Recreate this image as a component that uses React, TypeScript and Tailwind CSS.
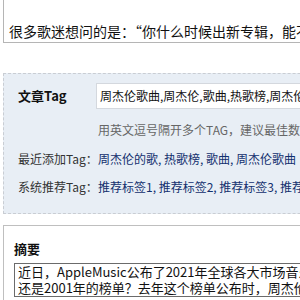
export default function App() {
  const font = { fontFamily: '"Noto Sans CJK SC", "Liberation Sans", sans-serif' }
  return (
    <div className="w-[300px] h-[300px] overflow-hidden bg-white text-[#222]" style={font}>
      <div className="w-[700px] pl-[3px]">
        {/* Content box (top cut off) */}
        <div className="h-[43px] border-x border-b border-[#b5b5b5] flex items-end pl-[5px]">
          <p className="text-[14px] leading-[22px] text-[#111]">
            很多歌迷想问的是：“你什么时候出新专辑，能不能快点出新歌？”
          </p>
        </div>

        {/* Tag panel */}
        <div className="mt-[30px] h-[141px] border border-dashed border-[#c9cdd3] bg-[#e8eef5] pl-[14px] pt-[9px] text-[12px]">
          <div className="flex items-center">
            <span className="w-[78px] text-[13px] font-bold text-[#111]">文章Tag</span>
            <div className="h-[26px] w-[400px] bg-white border border-[#d4d8de] flex items-center pl-[3px] text-[12px] text-[#111]">
              周杰伦歌曲,周杰伦,歌曲,热歌榜,周杰伦的歌
            </div>
          </div>
          <p className="pl-[80px] mt-[12px] text-[#666] leading-[18px]">
            用英文逗号隔开多个TAG，建议最佳数量为3-5个
          </p>
          <div className="flex mt-[11px] leading-[18px]">
            <span className="w-[80px] text-[#333]">最近添加Tag：</span>
            <span className="text-[#13306e]">周杰伦的歌, 热歌榜, 歌曲, 周杰伦歌曲</span>
          </div>
          <div className="flex mt-[10px] leading-[18px]">
            <span className="w-[80px] text-[#333]">系统推荐Tag：</span>
            <span className="text-[#13306e]">推荐标签1, 推荐标签2, 推荐标签3, 推荐标签4</span>
          </div>
        </div>

        {/* Summary panel */}
        <div className="mt-[11px] border border-[#bfbfbf] bg-white pl-[10px] pt-[14px] h-[120px]">
          <p className="text-[13px] font-bold text-[#111] leading-[18px]">摘要</p>
          <div className="mt-[5px] w-[600px] border border-[#6b6b6b] pl-[3px] text-[13px] leading-[16px] text-[#111]">
            <p>近日，AppleMusic公布了2021年全球各大市场音乐年终榜单，</p>
            <p>还是2001年的榜单？去年这个榜单公布时，周杰伦以个人名义</p>
          </div>
        </div>
      </div>
    </div>
  )
}
